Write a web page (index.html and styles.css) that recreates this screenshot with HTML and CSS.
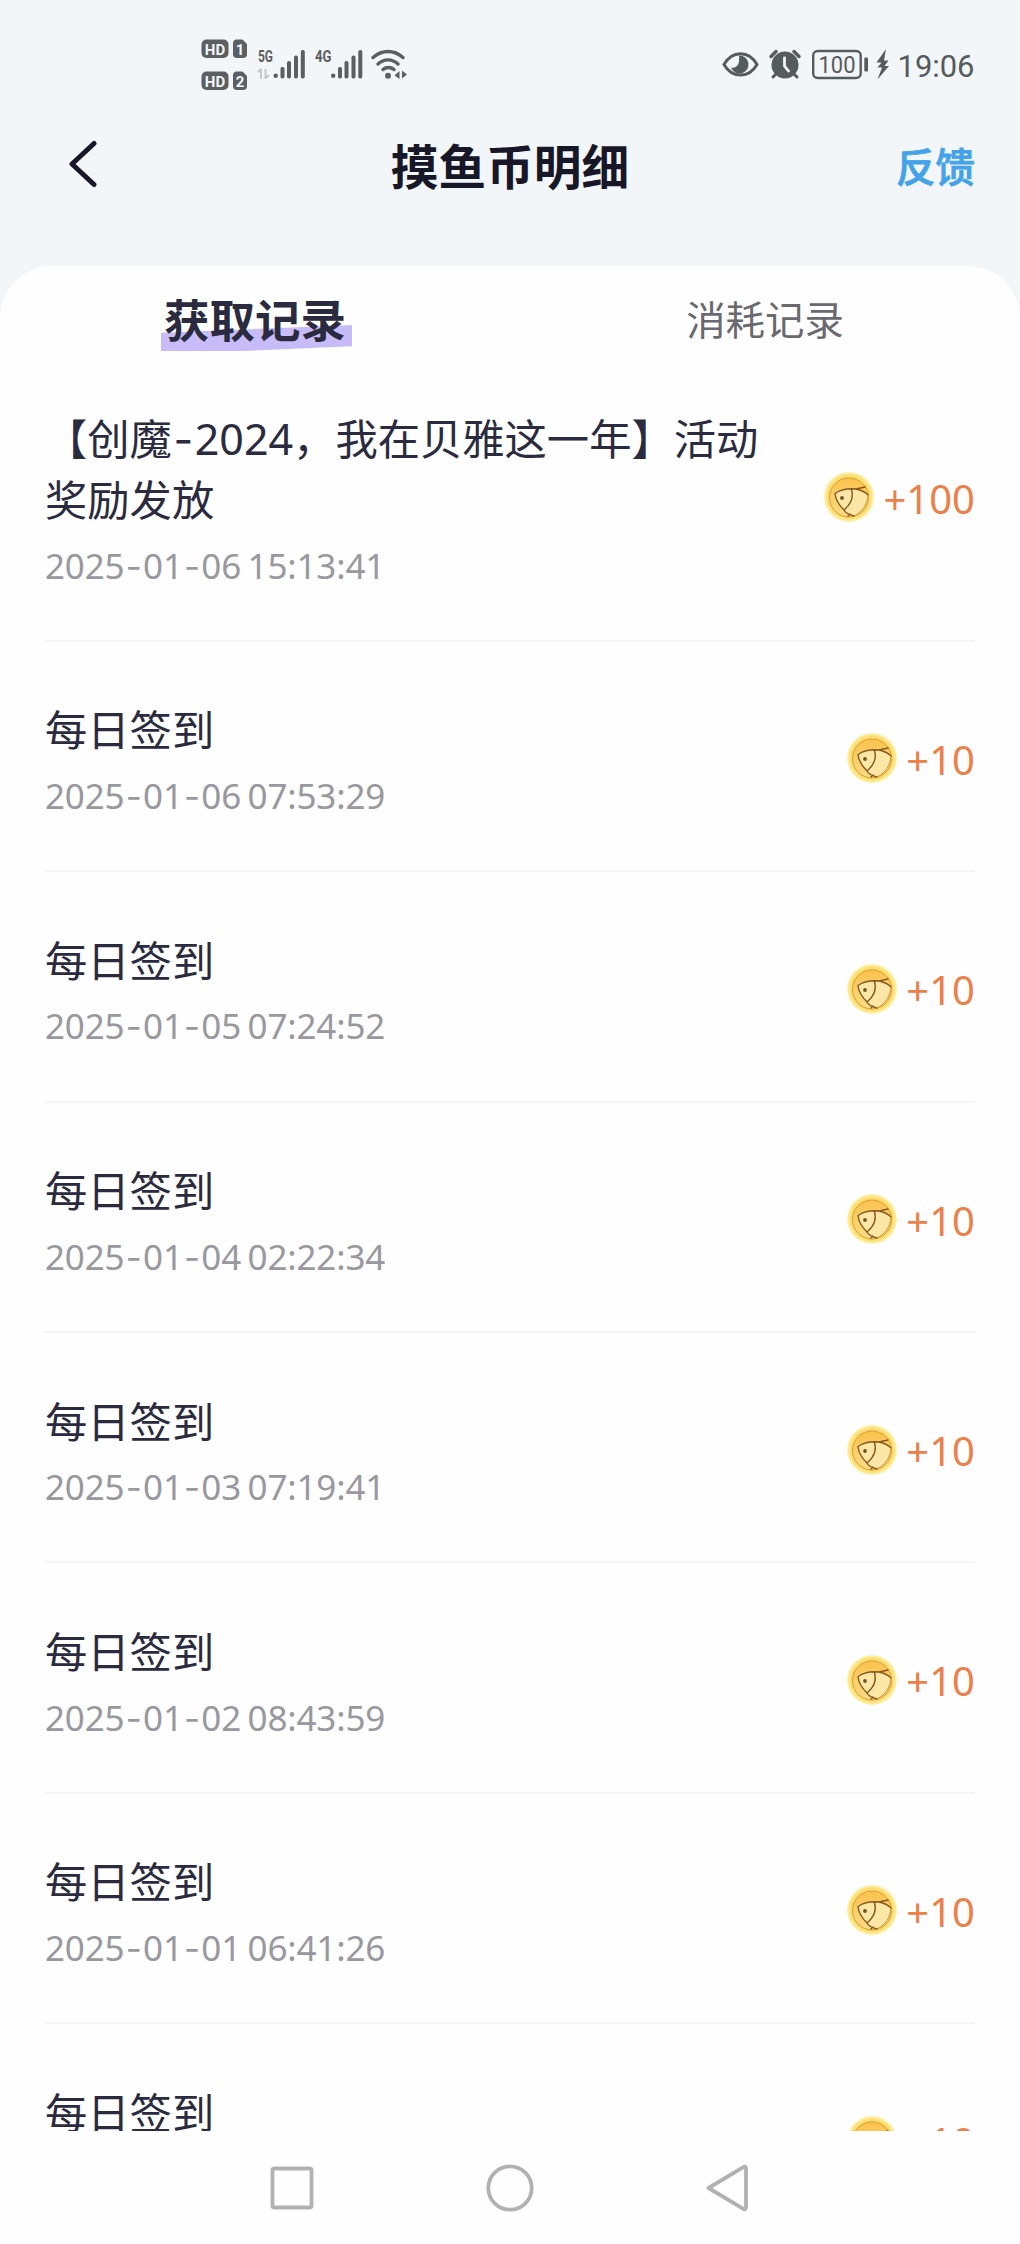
FILE: index.html
```
<!DOCTYPE html>
<html lang="zh-CN">

<head>
    <meta charset="UTF-8">
    <meta name="viewport" content="width=device-width, initial-scale=1">
    <link rel="stylesheet" href="styles.css">
    <title>摸鱼币明细</title>
</head>

<body>
    <svg class="defs" width="0" height="0">
        <defs>
            <radialGradient id="coinRim">
                <stop offset="0.7" stop-color="#f9cf58" />
                <stop offset="0.86" stop-color="#fbdf74" />
                <stop offset="1" stop-color="#fff4b4" />
            </radialGradient>
            <linearGradient id="coinFace" x1="0" y1="0" x2="0" y2="1">
                <stop offset="0" stop-color="#fbc24c" />
                <stop offset="1" stop-color="#fbdc85" />
            </linearGradient>
        </defs>
        <symbol id="coin" viewBox="0 0 50 50">
            <circle cx="25" cy="25" r="25" fill="url(#coinRim)" />
            <circle cx="25" cy="25.5" r="19.5" fill="url(#coinFace)" stroke="#d9a038" stroke-width="1" />
            <path d="M11 20C18 16 25 16 32 17.500C37 18 41 20 44 22.500C44 33 36 42 26 44L20 38C15 33 11.500 27 11 20Z" fill="#fde7a6" />
            <path d="M24 44L26 42M20 38C15 33 11.500 27 11 21.500C17 17 26 16.500 32 17L41 15M32 17C37 18 41 20 44 23M27.500 17.500C30 26 26 33 20 38M20 38C22 42 26 43 30 44" fill="none" stroke="#87581d" stroke-width="1.400" stroke-linecap="round" />
            <path d="M44 23C43 33 38 40 31 43.500" fill="none" stroke="#cf9c45" stroke-width="1" />
            <circle cx="18" cy="26" r="1.900" fill="#6e5426" />
        </symbol>
    </svg>

    <div class="status-bar">
        <svg class="status-left" width="210" height="60" viewBox="200 35 210 60" fill="#5b5f61">
            <rect x="201.500" y="39.500" width="27" height="18.500" rx="5" />
            <path d="M237 39.500h5.500l4.500 4.500v10a4 4 0 0 1-4 4h-6a4 4 0 0 1-4-4v-10.500a4 4 0 0 1 4-4z" />
            <rect x="201.500" y="71.500" width="27" height="18.500" rx="5" />
            <path d="M237 71.500h5.500l4.500 4.500v10a4 4 0 0 1-4 4h-6a4 4 0 0 1-4-4v-10.500a4 4 0 0 1 4-4z" />
            <g class="badge-text">
                <text x="215" y="54.500">HD</text>
                <text x="240" y="54.500">1</text>
                <text x="215" y="86.500">HD</text>
                <text x="240" y="86.500">2</text>
            </g>
            <g class="net-text">
                <text x="258" y="62" textLength="15" lengthAdjust="spacingAndGlyphs">5G</text>
                <text x="315" y="62" textLength="16.500" lengthAdjust="spacingAndGlyphs">4G</text>
            </g>
            <path d="M261 69v10M265.500 69v10M258 72l3-3M265.500 78l3.500-3" stroke="#c0c4c7" stroke-width="1.800" fill="none" />
            <g id="bars">
                <circle cx="275.700" cy="75.800" r="2.200" />
                <rect x="280.500" y="67" width="4" height="11.500" rx="1.800" />
                <rect x="287" y="61" width="4" height="17.500" rx="1.800" />
                <rect x="294" y="55.500" width="4" height="23" rx="1.800" />
                <rect x="300.800" y="50" width="4" height="28.500" rx="1.800" />
            </g>
            <use href="#bars" x="57.500" />
            <path d="M373 57.500C382 49.500 394 49.500 403 57.500M378 64C384 58.500 392 58.500 398 64M383 69.500C386 66.800 391 66.800 394 69.500" fill="none" stroke="#5b5f61" stroke-width="3.400" stroke-linecap="round" />
            <circle cx="388" cy="75.800" r="3" />
            <path d="M394.500 75.500l5-4.500v8zM407 74.500l-5-4v8z" />
        </svg>
        <svg class="status-right" width="254" height="40" viewBox="721 44 254 40" fill="#565b5d">
            <path d="M724 64.500C732 50 749 50 757 64.500C749 78.500 732 78.500 724 64.500Z" fill="none" stroke="#565b5d" stroke-width="3" />
            <path d="M739 55.500a9 9 0 1 1-8 12c3 1 6.500-1 7.500-4c.8-3 .8-5.500.5-8z" />
            <circle cx="785" cy="65" r="13.500" />
            <path d="M771 56.500l5-5M799 56.500l-5-5" stroke="#565b5d" stroke-width="3.500" stroke-linecap="round" />
            <path d="M775.500 74.500l-2.500 2.500M794.500 74.500l2.500 2.500" stroke="#565b5d" stroke-width="3" stroke-linecap="round" />
            <path d="M784.500 58v8l4 5" fill="none" stroke="#f2f6f9" stroke-width="2.800" stroke-linecap="round" />
            <rect x="813.200" y="51" width="47.500" height="27" rx="4.500" fill="none" stroke="#565b5d" stroke-width="2.400" />
            <rect x="864.300" y="57.500" width="3.700" height="14" rx="1" />
            <path d="M886 49l-9.500 13.500h5l-4 5h4.500l-4.500 12L889 66h-4.500l4-5.500h-4.500z" />
            <text class="battery-text" x="837" y="72.800" text-anchor="middle" textLength="37" lengthAdjust="spacingAndGlyphs">100</text>
            <text class="clock-text" x="897.500" y="77" textLength="77" lengthAdjust="spacingAndGlyphs">19:06</text>
        </svg>
    </div>

    <header class="nav-bar">
        <svg class="back" width="30" height="48" viewBox="0 0 30 48">
            <path d="M26 3.500L4 24L26 44.500" fill="none" stroke="#171727" stroke-width="5" stroke-linecap="round" stroke-linejoin="round" />
        </svg>
        <h1>摸鱼币明细</h1>
        <a class="feedback">反馈</a>
    </header>

    <main class="card">
        <div class="tabs">
            <div class="tab active"><span>获取记录</span></div>
            <div class="tab"><span>消耗记录</span></div>
        </div>
        <div class="list" id="list"></div>
    </main>

    <footer class="system-nav">
        <svg width="48" height="48" viewBox="0 0 48 48"><rect x="4.500" y="4.500" width="39" height="39" rx="2" /></svg>
        <svg width="48" height="48" viewBox="0 0 48 48"><circle cx="24" cy="24" r="21.700" /></svg>
        <svg width="48" height="48" viewBox="0 0 48 48"><path d="M4.500 24L39.800 2.800Q42 2.500 42 5V43Q42 45.500 39.800 45.200Z" /></svg>
    </footer>

    <script>
        const records = [
            { title: '【创魔<span class="num">-2024</span>，我在贝雅这一年】活动奖励发放', time: '2025-01-06 15:13:41', amount: 100 },
            { title: '每日签到', time: '2025-01-06 07:53:29', amount: 10 },
            { title: '每日签到', time: '2025-01-05 07:24:52', amount: 10 },
            { title: '每日签到', time: '2025-01-04 02:22:34', amount: 10 },
            { title: '每日签到', time: '2025-01-03 07:19:41', amount: 10 },
            { title: '每日签到', time: '2025-01-02 08:43:59', amount: 10 },
            { title: '每日签到', time: '2025-01-01 06:41:26', amount: 10 },
            { title: '每日签到', time: '', amount: 10 },
        ];

        // hyphens get their own, wider box
        const wideHyphens = text => text.replace(/-(?=\d)/g, '<i>-</i>');

        document.getElementById('list').innerHTML = records.map(r => `
            <div class="item">
                <div class="info">
                    <div class="title">${wideHyphens(r.title)}</div>
                    <div class="time">${wideHyphens(r.time)}</div>
                </div>
                <div class="amount"><svg class="coin"><use href="#coin" /></svg>+${r.amount}</div>
            </div>`).join('');
    </script>
</body>

</html>
```
FILE: styles.css
```
* {
    box-sizing: border-box;
}

body {
    margin: 0;
    height: 2244px;
    display: flex;
    flex-direction: column;
    overflow: hidden;
    background: #f2f6f9;
    color: #2b2b40;
    font-family: "Noto Sans CJK SC", sans-serif;
}

.defs {
    display: block;
}

.status-bar {
    height: 100px;
    padding: 35px 45px 0 200px;
    display: flex;
    justify-content: space-between;
}

.status-bar svg {
    overflow: visible;
}

.status-right {
    margin-top: 9px;
}

.badge-text {
    font: bold 15px Roboto, sans-serif;
    fill: #f2f6f9;
    text-anchor: middle;
}

.net-text {
    font: bold 16px Roboto, sans-serif;
}

.battery-text {
    font: 24px Roboto, sans-serif;
}

.clock-text {
    font: 32px Roboto, sans-serif;
}

.nav-bar {
    height: 166px;
    padding: 0 45px 36px 68px;
    display: grid;
    grid-template-columns: 1fr auto 1fr;
    align-items: center;
}

.nav-bar h1 {
    margin: 0;
    padding-right: 23px;
    font-size: 47.7px;
    line-height: 60px;
    font-weight: 700;
    color: #171727;
}

.back {
    margin-top: -3px;
}

.feedback {
    justify-self: end;
    font-size: 39.5px;
    line-height: 60px;
    font-weight: 500;
    color: #43a2e8;
}

.card {
    flex: none;
    height: 1865px;
    overflow: hidden;
    background: #fefefe;
    border-radius: 52px 52px 0 0;
}

.tabs {
    height: 84px;
    padding-top: 18px;
    display: flex;
}

.tab {
    flex: 1;
    text-align: center;
    font-size: 39.4px;
    line-height: 68px;
    color: #69696f;
}

.tab.active {
    font-size: 45.5px;
    font-weight: 700;
    color: #2b2b40;
}

.tab.active span {
    position: relative;
    display: inline-block;
    isolation: isolate;
}

/* brush mark under the selected tab */
.tab.active span::before {
    content: "";
    position: absolute;
    z-index: -1;
    left: -3px;
    right: -6px;
    top: 41px;
    height: 26px;
    background: #c8bcf8;
    clip-path: polygon(0 30%, 100% 0, 100% 82%, 42% 100%, 0 100%);
}

.list {
    padding: 0 45px;
}

.item {
    display: flex;
    justify-content: space-between;
    align-items: center;
    padding: 55.5px 0 49.2px;
    border-bottom: 2px solid #f5f5f7;
}

.info {
    width: 724px;
}

.title {
    font-size: 42.3px;
    line-height: 61.5px;
}

.title .num {
    font-family: "Noto Sans", sans-serif;
    font-size: 43px;
    line-height: 1;
}

.time {
    height: 50px;
    margin-top: 12.2px;
    font-family: "Noto Sans", sans-serif;
    font-size: 35px;
    line-height: 50px;
    letter-spacing: -0.15px;
    word-spacing: -2.5px;
    color: #98989e;
}

.info i {
    display: inline-block;
    width: 0.53em;
    text-align: center;
    font-family: Inter, sans-serif;
    font-style: normal;
    line-height: 1;
}

.amount {
    display: flex;
    align-items: center;
    margin-top: 1.5px;
    font-family: "Noto Sans", sans-serif;
    font-size: 40px;
    line-height: 50px;
    color: #ec8049;
}

.coin {
    width: 50px;
    height: 50px;
    margin: -3px 9px 0 0;
}

.system-nav {
    flex: 1;
    display: flex;
    justify-content: center;
    align-items: center;
    gap: 170px;
    background: #fefefe;
}

.system-nav svg {
    fill: none;
    stroke: #b1b1b1;
    stroke-width: 3.8;
    stroke-linejoin: round;
}

.nav-bar .feedback {
    -webkit-text-stroke: 0.8px #43a2e8;
}
```
